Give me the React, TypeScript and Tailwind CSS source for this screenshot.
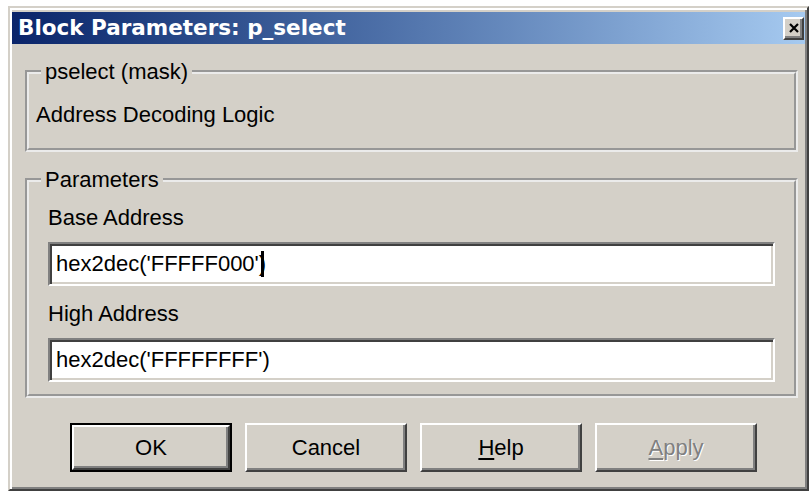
import React from 'react';

const sans = "font-['Liberation_Sans',Arial,sans-serif]";

// Raised 3D edge used by push buttons and the caption close box
const raised =
  'border-2 border-t-white border-l-white border-r-[#404040] border-b-[#404040] shadow-[inset_-2px_-2px_0_#808080]';

// Sunken edge for edit fields
const sunken =
  'border-2 border-t-[#808080] border-l-[#808080] border-r-white border-b-white shadow-[inset_2px_2px_0_#404040,inset_-2px_-2px_0_#d4d0c8]';

// Etched group box frame (groove gives the grey/white line pair)
const groupBox = 'ml-[13px] mr-[7px] mt-[15px] border-[4px] border-[#ebebeb] [border-style:groove]';

const PushButton = ({
  children,
  isDefault,
  disabled,
}: {
  children: React.ReactNode;
  isDefault?: boolean;
  disabled?: boolean;
}) => {
  const face = (
    <div
      className={`flex h-full w-full items-center justify-center bg-[#d4d0c8] ${raised} text-[22px] leading-[26px] ${
        disabled ? 'text-[#808080] [text-shadow:1px_1px_0_#fff]' : 'text-black'
      }`}
    >
      {children}
    </div>
  );
  return isDefault ? (
    <div className="h-[49px] w-[162px] border-2 border-black">{face}</div>
  ) : (
    <div className="h-[49px] w-[162px]">{face}</div>
  );
};

const EditField = ({ value, caret }: { value: string; caret?: boolean }) => (
  <div className={`mt-[11px] flex h-[44px] w-full items-center bg-white pl-[6px] ${sunken}`}>
    <span className="text-[22px] leading-[26px] text-black whitespace-pre">{value}</span>
    {caret && <span className="-ml-[5px] h-[26px] w-[3px] bg-black" />}
  </div>
);

export default function App() {
  return (
    <div className={`h-[491px] w-[809px] overflow-hidden bg-white ${sans}`}>
      <div className="ml-[8px] mt-[6px] h-[485px] w-[801px] border-2 border-t-[#d4d0c8] border-l-[#d4d0c8] border-r-[#404040] border-b-[#404040] bg-[#d4d0c8] px-[2px] pt-[4px] shadow-[inset_2px_2px_0_#fff,inset_-2px_-2px_0_#808080]">
        {/* caption */}
        <div className="flex h-[32px] items-center justify-between bg-gradient-to-r from-[#0a246a] to-[#a6caf0] pl-[6px]">
          <span className="font-['DejaVu_Sans',Verdana,sans-serif] text-[21.5px] font-bold leading-none text-white">
            Block Parameters: p_select
          </span>
          <div className={`mr-[1px] flex h-[23px] w-[21px] items-center justify-center bg-[#d4d0c8] ${raised}`}>
            <svg width="10" height="10" viewBox="0 0 10 10">
              <path d="M1 1 L9 9 M9 1 L1 9" stroke="#000" strokeWidth="2.2" />
            </svg>
          </div>
        </div>

        {/* mask description */}
        <fieldset className={`${groupBox} h-[93px] pl-[7px] pt-[17px]`}>
          <legend className="ml-[5px] px-[4px] text-[22px] leading-[26px] text-black">pselect (mask)</legend>
          <div className="text-[22px] leading-[26px] text-black">Address Decoding Logic</div>
        </fieldset>

        {/* parameters */}
        <fieldset className={`${groupBox} px-[19px] pb-[12px] pt-[12px]`}>
          <legend className="-ml-[7px] px-[4px] text-[22px] leading-[26px] text-black">Parameters</legend>
          <div className="text-[22px] leading-[26px] text-black">Base Address</div>
          <EditField value="hex2dec('FFFFF000')" caret />
          <div className="mt-[15px] text-[22px] leading-[26px] text-black">High Address</div>
          <EditField value="hex2dec('FFFFFFFF')" />
        </fieldset>

        {/* buttons */}
        <div className="mt-[25px] flex gap-[13px] pl-[58px]">
          <PushButton isDefault>OK</PushButton>
          <PushButton>Cancel</PushButton>
          <PushButton>
            <span className="underline underline-offset-[3px] decoration-[2px]">H</span>elp
          </PushButton>
          <PushButton disabled>
            <span className="underline underline-offset-[3px] decoration-[2px]">A</span>pply
          </PushButton>
        </div>
      </div>
    </div>
  );
}
